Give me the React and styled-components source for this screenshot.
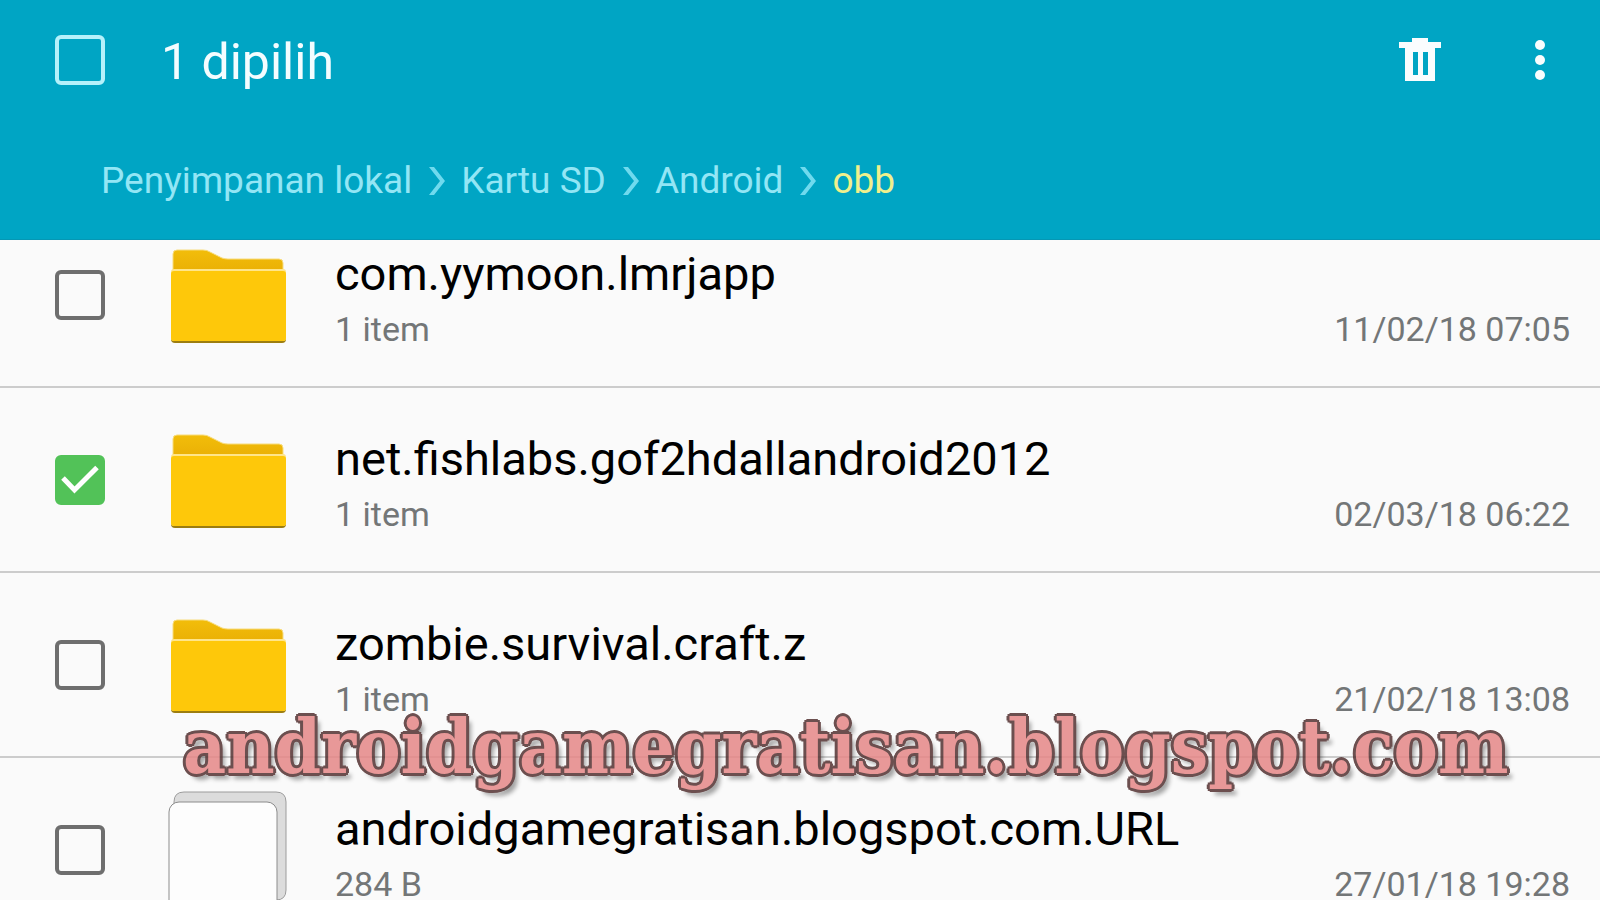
import React, { useState } from "react";
import styled, { createGlobalStyle } from "styled-components";

const folders = ["Penyimpanan lokal", "Kartu SD", "Android"];

export default function App() {
  const [files, setFiles] = useState([
    {
      name: "com.yymoon.lmrjapp",
      info: "1 item",
      date: "11/02/18 07:05",
      type: "folder",
      checked: false,
    },
    {
      name: "net.fishlabs.gof2hdallandroid2012",
      info: "1 item",
      date: "02/03/18 06:22",
      type: "folder",
      checked: true,
    },
    {
      name: "zombie.survival.craft.z",
      info: "1 item",
      date: "21/02/18 13:08",
      type: "folder",
      checked: false,
    },
    {
      name: "androidgamegratisan.blogspot.com.URL",
      info: "284 B",
      date: "27/01/18 19:28",
      type: "file",
      checked: false,
    },
  ]);
  const selected = files.filter((file) => file.checked).length;
  const allSelected = selected === files.length;

  function toggleFile(index) {
    setFiles((old) =>
      old.map((file, i) =>
        i === index ? { ...file, checked: !file.checked } : file
      )
    );
  }
  function toggleAll() {
    setFiles((old) => old.map((file) => ({ ...file, checked: !allSelected })));
  }

  return (
    <Page>
      <GlobalStyle />
      <Header>
        <Toolbar>
          <CheckBox
            id="all"
            label="Pilih semua"
            light
            checked={allSelected}
            onChange={toggleAll}
          />
          <Title>{selected} dipilih</Title>
          <IconButton aria-label="Hapus">
            <svg width="42" height="44" viewBox="0 0 42 44" fill="#fafdfe">
              <path
                fillRule="evenodd"
                d="M13 0H29V4H42V10H36V43H6V10H0V4H13ZM14 14V37H19V14ZM24 14V37H29V14Z"
              />
            </svg>
          </IconButton>
          <IconButton aria-label="Opsi lainnya">
            <svg width="10" height="40" viewBox="0 0 10 40" fill="#fafdfe">
              <circle cx="5" cy="5" r="5" />
              <circle cx="5" cy="20" r="5" />
              <circle cx="5" cy="35" r="5" />
            </svg>
          </IconButton>
        </Toolbar>
        <Breadcrumb aria-label="Lokasi">
          {folders.map((folder) => (
            <React.Fragment key={folder}>
              <Crumb href="#">{folder}</Crumb>
              <svg width="17" height="30" viewBox="0 0 17 30" aria-hidden="true">
                <path d="M1 1H6L17 15L6 29H1L12 15Z" fill="#6fdaee" />
              </svg>
            </React.Fragment>
          ))}
          <Crumb href="#" $current aria-current="page">
            obb
          </Crumb>
        </Breadcrumb>
      </Header>
      <Content>
        <FileList>
          {files.map((file, index) => (
            <FileRow key={file.name}>
              <CheckBox
                id={`file-${index}`}
                checked={file.checked}
                onChange={() => toggleFile(index)}
              />
              {file.type === "folder" ? <FolderIcon /> : <DocumentIcon />}
              <FileText>
                <FileName htmlFor={`file-${index}`}>{file.name}</FileName>
                <Details>
                  <span>{file.info}</span>
                  <time>{file.date}</time>
                </Details>
              </FileText>
            </FileRow>
          ))}
        </FileList>
      </Content>
      <Watermark>androidgamegratisan.blogspot.com</Watermark>
    </Page>
  );
}

function CheckBox({ id, label, light, checked, onChange }) {
  return (
    <CheckHolder>
      <CheckInput
        type="checkbox"
        id={id}
        aria-label={label}
        $light={light}
        checked={checked}
        onChange={onChange}
      />
      {checked && (
        <CheckMark viewBox="0 0 50 50" aria-hidden="true">
          <path
            d="M8 23L19.500 35L42 12.500"
            fill="none"
            stroke="#ffffff"
            strokeWidth="5"
          />
        </CheckMark>
      )}
    </CheckHolder>
  );
}

function FolderIcon() {
  return (
    <FileIcon viewBox="0 0 120 120" aria-hidden="true">
      <defs>
        <linearGradient id="folderBack" x1="0" y1="0" x2="0" y2="1">
          <stop offset="0" stopColor="#f2bd0a" />
          <stop offset="1" stopColor="#e9ae05" />
        </linearGradient>
      </defs>
      <path
        d="M6 40V19Q6 15 10 15H36Q40 15 43 17L55 23Q58 24 61 24H112Q116 24 116 28V40Z"
        fill="url(#folderBack)"
        stroke="#f8dc7c"
        strokeWidth="1"
      />
      <rect x="4" y="37" width="115" height="71" rx="4" fill="#9c7d10" />
      <rect x="4" y="34" width="115" height="72" rx="3" fill="#ffe58a" />
      <rect x="4" y="36" width="115" height="70" rx="3" fill="#fec80a" />
    </FileIcon>
  );
}

function DocumentIcon() {
  return (
    <FileIcon viewBox="0 0 120 120" aria-hidden="true">
      <path
        d="M7 22V12Q7 2 17 2H109Q119 2 119 12V100Q119 110 109 110H60Z"
        fill="#dcdcdc"
        stroke="#9c9c9c"
      />
      <rect
        x="2"
        y="12"
        width="108"
        height="118"
        rx="10"
        fill="#fdfdfd"
        stroke="#8c8c8c"
      />
    </FileIcon>
  );
}

const GlobalStyle = createGlobalStyle`
  * {
    box-sizing: border-box;
  }
  body {
    margin: 0;
    background-color: #fafafa;
    font-family: Roboto, "Liberation Sans", sans-serif;
  }
`;
const Page = styled.div`
  position: relative;
  height: 100vh;
  overflow: hidden;
  display: flex;
  flex-direction: column;
`;
const Header = styled.header`
  flex-shrink: 0;
  background-color: #00a5c4;
  border-bottom: 1px solid #0597b4;
`;
const Toolbar = styled.div`
  height: 120px;
  padding: 0 20px 0 55px;
  display: flex;
  align-items: center;
  gap: 40px;
`;
const Title = styled.h1`
  flex: 1;
  margin: 0;
  padding: 4px 0 0 16px;
  color: #f4fdff;
  font-size: 50px;
  font-weight: 400;
  white-space: nowrap;
`;
const IconButton = styled.button`
  width: 80px;
  height: 80px;
  padding: 0;
  border: none;
  background: none;
  display: flex;
  align-items: center;
  justify-content: center;
  cursor: pointer;
`;
const Breadcrumb = styled.nav`
  height: 119px;
  padding: 2px 0 0 101px;
  display: flex;
  align-items: center;
  gap: 16px;
`;
const Crumb = styled.a`
  color: ${(props) => (props.$current ? "#f0f08c" : "#93e6f5")};
  font-size: 37px;
  text-decoration: none;
  white-space: nowrap;
`;
const Content = styled.main`
  flex: 1;
  min-height: 0;
  overflow: hidden;
`;
/* the list is scrolled a little way under the header */
const FileList = styled.ul`
  margin: -37px 0 0;
  padding: 0;
  list-style: none;
`;
const FileRow = styled.li`
  height: 185px;
  padding: 0 30px 0 55px;
  border-bottom: 2px solid #cccccc;
  display: flex;
  align-items: center;
`;
const CheckHolder = styled.span`
  flex-shrink: 0;
  width: 50px;
  height: 50px;
  display: grid;
`;
const CheckInput = styled.input`
  appearance: none;
  grid-area: 1 / 1;
  width: 50px;
  height: 50px;
  margin: 0;
  border: 4px solid ${(props) => (props.$light ? "#b5f1fb" : "#6e6e6e")};
  border-radius: 6px;
  cursor: pointer;
  &:checked {
    border-color: #52c258;
    background-color: #52c258;
  }
`;
const CheckMark = styled.svg`
  grid-area: 1 / 1;
  width: 50px;
  height: 50px;
  pointer-events: none;
`;
const FileIcon = styled.svg`
  flex-shrink: 0;
  width: 120px;
  height: 120px;
  margin: 0 48px 0 62px;
`;
const FileText = styled.div`
  flex: 1;
  padding-top: 6px;
  display: flex;
  flex-direction: column;
  gap: 6px;
`;
const FileName = styled.label`
  color: #000000;
  font-size: 47px;
  line-height: 56px;
  white-space: nowrap;
`;
const Details = styled.div`
  display: flex;
  justify-content: space-between;
  color: #737677;
  font-size: 34px;
  line-height: 42px;
  white-space: nowrap;
`;
/* the outline is built from shadows so the letters stay heavy inside it */
const Watermark = styled.div`
  position: absolute;
  left: 183px;
  bottom: 108px;
  color: #e68888;
  font-family: "DejaVu Serif Condensed", "DejaVu Serif", serif;
  font-size: 74px;
  font-weight: 700;
  font-stretch: condensed;
  line-height: 90px;
  white-space: nowrap;
  -webkit-text-stroke: 2px #e68888;
  paint-order: stroke fill;
  text-shadow: 3px 0 0 #553434, -3px 0 0 #553434, 0 3px 0 #553434,
    0 -3px 0 #553434, 2px 2px 0 #553434, -2px 2px 0 #553434,
    2px -2px 0 #553434, -2px -2px 0 #553434, 5px 6px 4px rgba(0, 0, 0, 0.4);
  opacity: 0.86;
  pointer-events: none;
`;
